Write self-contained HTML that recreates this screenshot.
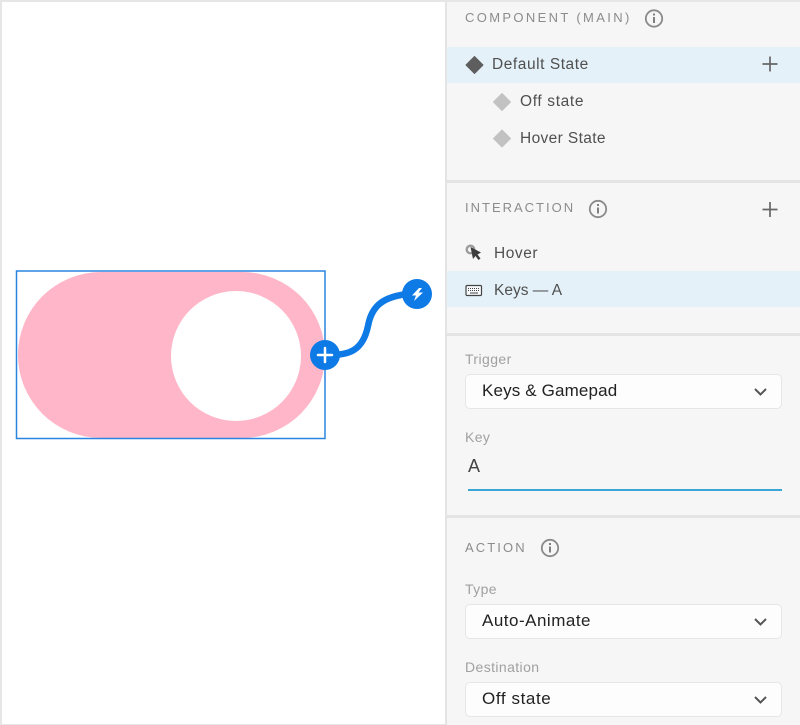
<!DOCTYPE html>
<html><head><meta charset="utf-8"><style>
html,body{margin:0;padding:0;background:#fff}
#p{position:relative;width:800px;height:725px;overflow:hidden;background:#fff;font-family:"Liberation Sans",sans-serif}
#p div{position:absolute}
.t{white-space:nowrap;line-height:20px;height:20px}
.h{font-size:13px;color:#8c8c8c;letter-spacing:2.1px}
.i{font-size:15.5px;color:#505050;letter-spacing:.55px}
.l{font-size:14px;color:#a0a0a0;letter-spacing:.4px}
.v{font-size:17px;color:#222;letter-spacing:.5px}
.s{left:465px;width:315px;height:33px;background:#fdfdfd;border:1px solid #e6e6e6;border-radius:5px;box-sizing:content-box}
svg{position:absolute;overflow:visible}
</style></head><body><div id="p">
<div style="left:0;top:0;width:800px;height:725px;box-sizing:border-box;border:2px solid #e6e6e6;border-right:1px solid #e6e6e6;border-bottom:1px solid #e6e6e6"></div>
<div style="left:445px;top:0;width:355px;height:725px;background:#f6f6f6;border-left:2px solid #e4e4e4;box-sizing:border-box"></div>
<div style="left:445px;top:0;width:355px;height:2px;background:#e6e6e6"></div>
<div style="left:445px;top:180px;width:355px;height:3px;background:#e4e4e4"></div>
<div style="left:445px;top:333px;width:355px;height:3px;background:#e4e4e4"></div>
<div style="left:445px;top:515px;width:355px;height:3px;background:#e4e4e4"></div>
<div style="left:447px;top:47px;width:353px;height:36px;background:#e4f1f9"></div>
<div style="left:447px;top:271px;width:353px;height:36px;background:#e4f1f9"></div>

<svg style="left:0;top:0" width="800" height="725" viewBox="0 0 800 725">
<rect x="18" y="272" width="307" height="166" rx="83" fill="#ffb6c8"/>
<circle cx="236" cy="356" r="65" fill="#fff"/>
<rect x="16.500" y="271" width="308.500" height="167.500" fill="none" stroke="#2a85e0" stroke-width="1.500"/>
<path d="M325 355C350 356 363 350 368 326C372 304 385 295 417 293" fill="none" stroke="#0e7ae6" stroke-width="6.500"/>
<circle cx="325" cy="355" r="15" fill="#0e7ae6"/>
<path d="M325 348V362M318 355H332" stroke="#fff" stroke-width="2.500" stroke-linecap="round"/>
<circle cx="417" cy="294" r="15" fill="#0e7ae6"/>
<path d="M419 288L412 295.500H416L414 301L423 292.500H418.500L422 288Z" fill="#fff"/>

<g fill="none" stroke="#8a8a8a" stroke-width="1.800"><circle cx="654" cy="18.500" r="8.200"/><circle cx="598" cy="209" r="8.200"/><circle cx="550" cy="548" r="8.200"/></g>
<g fill="#808080"><rect x="653" y="17" width="2" height="6"/><rect x="653" y="13.500" width="2" height="2"/><rect x="597" y="207.500" width="2" height="6"/><rect x="597" y="204" width="2" height="2"/><rect x="549" y="546.500" width="2" height="6"/><rect x="549" y="543" width="2" height="2"/></g>

<path d="M474.500 56.500L483 65L474.500 73.500L466 65Z" fill="#5e5e5e" stroke="#5e5e5e" stroke-linejoin="round"/>
<path d="M502 93.500L510.500 102L502 110.500L493.500 102Z" fill="#c2c2c2" stroke="#c2c2c2" stroke-linejoin="round"/>
<path d="M502 130L510.500 138.500L502 147L493.500 138.500Z" fill="#c2c2c2" stroke="#c2c2c2" stroke-linejoin="round"/>
<path d="M770 56.500V71.500M762.500 64H777.500" stroke="#666" stroke-width="1.700"/>
<path d="M770 202V217M762.500 209.500H777.500" stroke="#666" stroke-width="1.700"/>

<circle cx="470.500" cy="249.500" r="3.800" fill="none" stroke="#9c9c9c" stroke-width="2.400"/>
<path d="M470.500 247L481 252.500L477.500 254.500L480.500 258.500L478.500 260L475.500 256L473 259Z" fill="#3c3c3c"/>
<rect x="466" y="285.500" width="15.500" height="10" rx="1.200" fill="#f6fafc" stroke="#444" stroke-width="1.200"/>
<path d="M468 288.500H480M468 290.500H480" stroke="#444" stroke-width="1.100" stroke-dasharray="1 1"/><path d="M470 293H478" stroke="#444" stroke-width="1"/>
</svg>

<div class="t h" style="left:465px;top:8px;letter-spacing:2.35px">COMPONENT (MAIN)</div>
<div class="t i" style="left:492px;top:55px">Default State</div>
<div class="t i" style="left:520px;top:92px;letter-spacing:.65px">Off state</div>
<div class="t i" style="left:520px;top:129px;letter-spacing:.37px">Hover State</div>
<div class="t h" style="left:465px;top:198px;letter-spacing:2px">INTERACTION</div>
<div class="t i" style="left:494px;top:244px">Hover</div>
<div class="t i" style="left:494px;top:281px;letter-spacing:0">Keys — A</div>
<div class="t l" style="left:465px;top:349px">Trigger</div>
<div class="s" style="top:374px"></div>
<div class="t v" style="left:482px;top:381px;letter-spacing:.15px">Keys &amp; Gamepad</div>
<div class="t l" style="left:465px;top:427px">Key</div>
<div class="t" style="left:468px;top:456px;font-size:18px;color:#444">A</div>
<div style="left:468px;top:489px;width:314px;height:2px;background:#3aa6d6"></div>
<div class="t h" style="left:465px;top:538px">ACTION</div>
<div class="t l" style="left:465px;top:579px">Type</div>
<div class="s" style="top:604px"></div>
<div class="t v" style="left:482px;top:611px">Auto-Animate</div>
<div class="t l" style="left:465px;top:657px">Destination</div>
<div class="s" style="top:682px"></div>
<div class="t v" style="left:482px;top:689px;letter-spacing:.6px">Off state</div>
<svg style="left:0;top:0;z-index:2" width="800" height="725" viewBox="0 0 800 725">
<path d="M755 389L760.500 394.500L766 389M755 619L760.500 624.500L766 619M755 697L760.500 702.500L766 697" fill="none" stroke="#555" stroke-width="2"/>
</svg>
</div></body></html>
